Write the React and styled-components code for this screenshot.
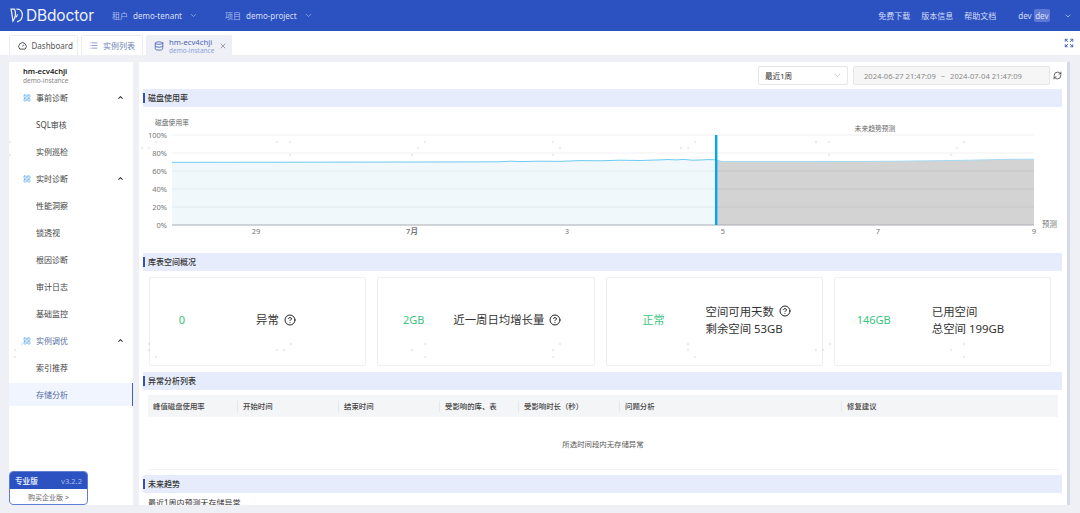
import React from "react";
import styled, { createGlobalStyle } from "styled-components";
import { ChevronDown, ChevronUp, CircleHelp, Database, Expand, LayoutGrid, List, RefreshCw, X } from "lucide-react";

const GlobalStyle = createGlobalStyle`
  html, body { margin: 0; padding: 0; height: 513px; overflow: hidden; background: #eef0f6; }
  body { font-family: "Noto Sans", "Noto Sans CJK SC", sans-serif; color: #333; }
  * { box-sizing: border-box; }
`;

const Page = styled.div`
  position: relative;
  width: 1080px;
  height: 513px;
  overflow: hidden;
  display: flex;
  flex-direction: column;
`;

const Header = styled.header`
  height: 31px;
  background: #2c51c1;
  color: #d5dff7;
  font-size: 8px;
  display: flex;
  align-items: center;
  flex: none;
`;

const Logo = styled.div`
  width: 112px;
  padding-left: 10px;
  display: flex;
  align-items: center;
  gap: 3px;
  color: #eef2fd;
  font-family: Inter, sans-serif;
  font-size: 15.5px;
  letter-spacing: -0.15px;
`;

const Scope = styled.div`
  width: ${(p) => p.$width}px;
  display: flex;
  align-items: center;
  font-size: 8px;
  span:first-child { opacity: 0.75; width: 21px; }
  svg { margin-left: 7px; opacity: 0.7; }
`;

const HeaderRight = styled.div`
  margin-left: auto;
  display: flex;
  align-items: center;
  padding-right: 8px;
`;

const HeaderLink = styled.span`
  margin-right: 11px;
`;

const UserName = styled.span`
  margin-left: 11px;
`;

const Badge = styled.span`
  margin: 0 14px 0 2px;
  padding: 1px 1.5px;
  border-radius: 2px;
  background: #5c78d2;
`;

const TabBar = styled.div`
  height: 24px;
  background: #fff;
  display: flex;
  align-items: flex-end;
  padding: 0 6px 0 9px;
  gap: 2.5px;
  flex: none;
`;

const Tab = styled.div`
  height: 20px;
  width: ${(p) => p.$width}px;
  border: 1px solid #eceef3;
  border-bottom: none;
  border-radius: 2px 2px 0 0;
  background: ${(p) => (p.$active ? "#eef0f6" : "#fff")};
  color: ${(p) => p.$color || "#555"};
  font-size: 8px;
  white-space: nowrap;
  display: flex;
  align-items: center;
  gap: 5px;
  padding-left: 7.5px;
`;

const TabText = styled.div`
  font-size: 7.7px;
  line-height: 10px;
  small { display: block; font-size: 6.5px; line-height: 8px; color: #8fa3dc; }
`;

const FullBtn = styled.div`
  margin-left: auto;
  align-self: center;
  display: flex;
  color: #2c51c1;
`;

const Body = styled.div`
  flex: 1;
  display: flex;
  padding: 7px 0 8px 9px;
  min-height: 0;
`;

const Sidebar = styled.aside`
  position: relative;
  width: 124px;
  background: #fff;
  flex: none;
`;

const InstanceName = styled.div`
  height: 22px;
  padding: 4px 0 0 14px;
  font-size: 7.6px;
  font-weight: 600;
  color: #222;
  line-height: 10px;
  small { display: block; font-size: 6.5px; font-weight: 400; color: #888; line-height: 10px; }
`;

const NavGroup = styled.div`
  height: 27px;
  display: flex;
  align-items: center;
  padding: 0 9px 0 14px;
  gap: 5px;
  font-size: 8px;
  color: ${(p) => (p.$muted ? "#5a6f9f" : "#444")};
  svg:last-child { margin-left: auto; color: #333; }
`;

const NavItem = styled.div`
  height: ${(p) => (p.$active ? 23 : 27)}px;
  margin: ${(p) => (p.$active ? "2px 0" : "0")};
  display: flex;
  align-items: center;
  padding-left: 27px;
  font-size: 8px;
  color: ${(p) => (p.$active ? "#52689f" : "#444")};
  background: ${(p) => (p.$active ? "#f0f5ff" : "transparent")};
  border-right: ${(p) => (p.$active ? "1.5px solid #3d5fc8" : "none")};
`;

const VersionCard = styled.div`
  position: absolute;
  left: 0;
  bottom: 0;
  width: 79px;
  height: 34px;
  border: 1px solid #5f7fd6;
  border-radius: 4px;
  overflow: hidden;
  background: #fff;
`;

const VersionTop = styled.div`
  height: 17px;
  background: #2c51c1;
  color: #dbe4fa;
  font-size: 7.6px;
  display: flex;
  align-items: center;
  justify-content: space-between;
  padding: 0 5px;
  font-weight: 600;
  span:last-child { font-weight: 400; opacity: 0.7; }
`;

const VersionBuy = styled.div`
  height: 15px;
  display: flex;
  align-items: center;
  justify-content: center;
  font-size: 7px;
  color: #666;
`;

const Main = styled.main`
  width: 928px;
  margin-left: 6px;
  background: #fff;
  padding: 0 5px 0 4px;
  overflow: hidden;
  flex: none;
`;

const ScrollTrack = styled.div`
  width: 3px;
  background: #d6dae4;
  flex: none;
`;

const Toolbar = styled.div`
  height: 27px;
  display: flex;
  align-items: center;
  justify-content: flex-end;
  font-size: 7.6px;
`;

const SelectBox = styled.div`
  width: 90px;
  height: 19px;
  margin-right: 5px;
  border: 1px solid #e6e6e6;
  border-radius: 2px;
  display: flex;
  align-items: center;
  justify-content: space-between;
  padding: 0 5px 0 6px;
  color: #333;
  svg { color: #bbb; }
`;

const RangeBox = styled.div`
  width: 197px;
  height: 19px;
  border: 1px solid #e6e6e6;
  border-radius: 2px;
  background: #f6f6f6;
  color: #8a8a8a;
  display: flex;
  align-items: center;
  padding-left: 10px;
  gap: 5px;
`;

const Refresh = styled.div`
  width: 12px;
  display: flex;
  justify-content: flex-end;
  color: #333;
`;

const SectionTitle = styled.div`
  height: 18px;
  padding-bottom: 1px;
  background: #e6ecfb;
  display: flex;
  align-items: center;
  font-size: 8px;
  font-weight: 500;
  color: #333;
  &::before {
    content: "";
    width: 2px;
    height: 10px;
    margin-right: 3px;
    background: #3350b8;
  }
`;

const ChartWrap = styled.div`
  height: 146px;
  margin-left: -4px;
  svg { display: block; }
  text { font-family: "Noto Sans", "Noto Sans CJK SC", sans-serif; font-size: 7.5px; fill: #777; }
`;

const ChartCaption = styled.text`
  && { font-size: 6.8px; fill: #666; }
`;

const Cards = styled.div`
  height: 101px;
  padding: 6px 11px 6px 6px;
  display: grid;
  grid-template-columns: repeat(4, 1fr);
  gap: 11px;
`;

const Card = styled.div`
  border: 1px solid #eeeff2;
  border-radius: 2px;
  padding-bottom: 4px;
  display: flex;
  align-items: center;
  font-size: 11.4px;
  line-height: 17px;
  color: #333;
`;

const CardValue = styled.div`
  width: ${(p) => p.$width}px;
  margin-right: ${(p) => p.$gap}px;
  text-align: center;
  font-size: 11px;
  color: #3ac47d;
  flex: none;
`;

const CardLine = styled.div`
  display: flex;
  align-items: center;
  gap: 5px;
  white-space: nowrap;
  svg { color: #222; }
`;

const Table = styled.div`
  margin: 5px 4px 0 5px;
  font-size: 7.4px;
`;

const TableHead = styled.div`
  height: 22px;
  background: #f4f5f7;
  display: grid;
  grid-template-columns: 90px 101px 101px 79px 101px 222px 1fr;
  align-items: center;
  font-weight: 500;
  color: #444;
`;

const HeadCell = styled.div`
  height: 11px;
  line-height: 11px;
  padding-left: 5px;
  border-right: 1px solid #e6e7ea;
  &:last-child { border-right: none; }
`;

const EmptyRow = styled.div`
  height: 53px;
  border-bottom: 1px solid #f3f3f5;
  display: flex;
  align-items: center;
  justify-content: center;
  color: #555;
`;

const Section4 = styled(SectionTitle)`
  margin-top: 5px;
`;

const ForecastText = styled.div`
  padding: 4px 0 0 5px;
  font-size: 8px;
  line-height: 12px;
  color: #333;
`;

const Watermark = styled.svg`
  position: absolute;
  inset: 0;
  pointer-events: none;
`;

const navTree = [
  { title: "事前诊断", items: ["SQL审核", "实例巡检"] },
  { title: "实时诊断", items: ["性能洞察", "锁透视", "根因诊断", "审计日志", "基础监控"] },
  { title: "实例调优", muted: true, items: ["索引推荐", "存储分析"] },
];

const columns = ["峰值磁盘使用率", "开始时间", "结束时间", "受影响的库、表", "受影响时长（秒）", "问题分析", "修复建议"];

const gridLines = [135, 153, 171, 189, 207];
const yLabels = ["100%", "80%", "60%", "40%", "20%", "0%"];
const xTicks = [["29", 256], ["7月", 412], ["3", 567], ["5", 723], ["7", 878], ["9", 1034]];

const pastLine = "172,162.3 300,162.2 420,162 500,161.8 510,161.2 520,161.6 540,161.2 560,161.4 580,160.6 600,160.8 620,160.2 640,160.5 660,159.9 668,159.5 676,159.9 684,159.4 692,160.2 700,160 708,159.6 716,159.8";
const futureLine = "716,159.8 722,161.6 800,161.6 860,161.5 900,161.2 960,160.4 1010,159.3 1034,159.2";

// watermark clusters repeat every 539px across and 202px down
const clusterOne = [[149, 148], [156, 142], [142, 148], [277, 142], [290, 142], [290, 155], [412, 155], [418, 148], [425, 142], [553, 142], [553, 155], [560, 148]];
const clusterTwo = [[149, 344], [149, 350], [156, 357], [277, 350], [284, 350], [291, 344], [412, 350], [425, 344], [425, 357], [553, 350], [560, 344], [553, 357]];
const dots = [...clusterOne, ...clusterTwo].flatMap(([x, y]) => [[x, y], [x + 539, y]]).concat([[15, 350], [15, 357], [22, 344], [10, 142], [10, 155]]);

function LogoMark() {
  return (
    <svg width="13" height="15" viewBox="0 0 13 15" fill="none" stroke="#eef2fd" strokeWidth="1.2">
      <path d="M1 1.2h3.6c1.6 3.6 1.1 7.6-1.6 12C2.2 9 2 5 1 1.2z" />
      <path d="M6.4 1.2h1.2c3 0 4.7 2.6 4.7 5.9 0 3.2-2 5.9-5.2 6.7" />
      <path d="M5.4 9.2c1.2-.4 1.9-1.4 2-3" />
    </svg>
  );
}

export default function App() {
  return (
    <Page>
      <GlobalStyle />
      <Header>
        <Logo>
          <LogoMark />
          DBdoctor
        </Logo>
        <Scope $width={113}>
          <span>租户</span>
          <span>demo-tenant</span>
          <ChevronDown size={9} />
        </Scope>
        <Scope $width={120}>
          <span>项目</span>
          <span>demo-project</span>
          <ChevronDown size={9} />
        </Scope>
        <HeaderRight>
          <HeaderLink>免费下载</HeaderLink>
          <HeaderLink>版本信息</HeaderLink>
          <HeaderLink>帮助文档</HeaderLink>
          <UserName>dev</UserName>
          <Badge>dev</Badge>
          <ChevronDown size={8} />
        </HeaderRight>
      </Header>
      <TabBar>
        <Tab $width={69}>
          <svg width="9" height="9" viewBox="0 0 10 10" fill="none" stroke="#444" strokeWidth="1">
            <path d="M2 9a4.2 4.2 0 1 1 6 0z" />
            <path d="M5 6l1.4-2" />
          </svg>
          Dashboard
        </Tab>
        <Tab $width={62.5} $color="#6d7fb5">
          <List size={9} />
          实例列表
        </Tab>
        <Tab $width={86} $active $color="#4a64b8">
          <Database size={10} />
          <TabText>
            hm-ecv4chji
            <small>demo-instance</small>
          </TabText>
          <X size={8} color="#777" />
        </Tab>
        <FullBtn>
          <Expand size={10} />
        </FullBtn>
      </TabBar>
      <Body>
        <Sidebar>
          <InstanceName>
            hm-ecv4chji
            <small>demo-instance</small>
          </InstanceName>
          {navTree.map((group) => (
            <div key={group.title}>
              <NavGroup $muted={group.muted}>
                <LayoutGrid size={8} color="#5aa7ea" />
                {group.title}
                <ChevronUp size={7} strokeWidth={3.5} />
              </NavGroup>
              {group.items.map((item) => (
                <NavItem key={item} $active={item === "存储分析"}>{item}</NavItem>
              ))}
            </div>
          ))}
          <VersionCard>
            <VersionTop>
              <span>专业版</span>
              <span>v3.2.2</span>
            </VersionTop>
            <VersionBuy>购买企业版 &gt;</VersionBuy>
          </VersionCard>
        </Sidebar>
        <Main>
          <Toolbar>
            <SelectBox>
              最近1周
              <ChevronDown size={9} />
            </SelectBox>
            <RangeBox>
              <span>2024-06-27 21:47:09</span>
              <span>~</span>
              <span>2024-07-04 21:47:09</span>
            </RangeBox>
            <Refresh>
              <RefreshCw size={9} />
            </Refresh>
          </Toolbar>
          <SectionTitle>磁盘使用率</SectionTitle>
          <ChartWrap>
            <svg width="928" height="146" viewBox="139 107 928 146">
              <polygon points={`172,225 ${pastLine} 716,225`} fill="#f0f8fc" />
              <polygon points={`716,225 ${futureLine} 1034,225`} fill="#d3d3d3" />
              {gridLines.map((y) => (
                <line key={y} x1="172" x2="1034" y1={y} y2={y} stroke="#000" strokeOpacity="0.06" />
              ))}
              <line x1="172" x2="1034" y1="225" y2="225" stroke="#a9acb2" />
              <polyline points={pastLine} fill="none" stroke="#6fcbf0" strokeWidth="1" />
              <polyline points={futureLine} fill="none" stroke="#a6daf2" strokeWidth="1" />
              <rect x="715" y="135" width="2.4" height="90" fill="#00a8f0" />
              {yLabels.map((label, i) => (
                <text key={label} x="167" y={137.5 + i * 18} textAnchor="end">{label}</text>
              ))}
              <ChartCaption x="155" y="125">磁盘使用率</ChartCaption>
              <ChartCaption x="875" y="131" textAnchor="middle">未来趋势预测</ChartCaption>
              <text x="1042" y="227">预测</text>
              {xTicks.map(([label, x]) => (
                <text key={label} x={x} y="234" textAnchor="middle" fontWeight={label === "7月" ? 600 : 400}>{label}</text>
              ))}
            </svg>
          </ChartWrap>
          <SectionTitle>库表空间概况</SectionTitle>
          <Cards>
            <Card>
              <CardValue $width={64} $gap={42}>0</CardValue>
              <CardLine>异常 <CircleHelp size={12} /></CardLine>
            </Card>
            <Card>
              <CardValue $width={71} $gap={4}>2GB</CardValue>
              <CardLine>近一周日均增长量 <CircleHelp size={12} /></CardLine>
            </Card>
            <Card>
              <CardValue $width={94} $gap={5}>正常</CardValue>
              <div>
                <CardLine>空间可用天数 <CircleHelp size={12} /></CardLine>
                <CardLine>剩余空间 53GB</CardLine>
              </div>
            </Card>
            <Card>
              <CardValue $width={78} $gap={19}>146GB</CardValue>
              <div>
                <CardLine>已用空间</CardLine>
                <CardLine>总空间 199GB</CardLine>
              </div>
            </Card>
          </Cards>
          <SectionTitle>异常分析列表</SectionTitle>
          <Table>
            <TableHead>
              {columns.map((col) => (
                <HeadCell key={col}>{col}</HeadCell>
              ))}
            </TableHead>
            <EmptyRow>所选时间段内无存储异常</EmptyRow>
          </Table>
          <Section4>未来趋势</Section4>
          <ForecastText>最近1周内预测无存储异常</ForecastText>
        </Main>
        <ScrollTrack />
      </Body>
      <Watermark width="1080" height="513">
        {dots.map(([x, y], i) => (
          <circle key={i} cx={x} cy={y} r="1.2" fill="#000" fillOpacity="0.08" />
        ))}
      </Watermark>
    </Page>
  );
}
